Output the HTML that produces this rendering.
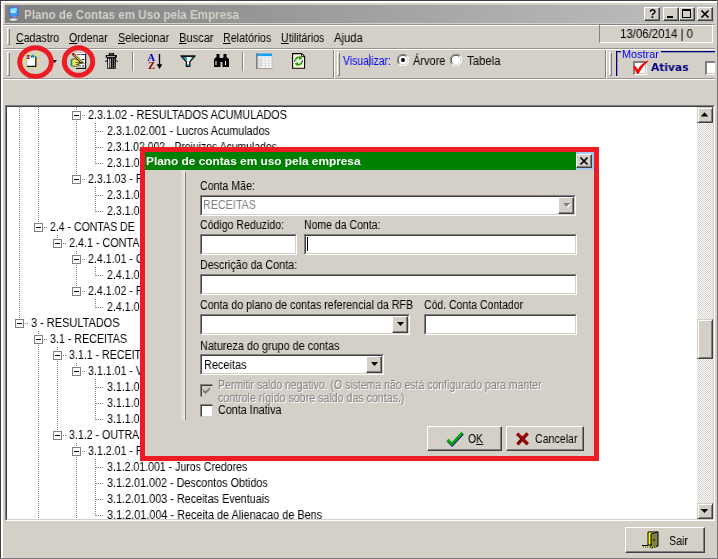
<!DOCTYPE html>
<html lang="pt-BR"><head><meta charset="utf-8"><title>Plano de Contas em Uso pela Empresa</title>
<style>
html,body{margin:0;padding:0}
body{width:718px;height:559px;background:#D4D0C8;position:relative;overflow:hidden;font-family:"Liberation Sans",sans-serif}
div,svg.a,span.t{position:absolute}
div{box-sizing:border-box}
span.t{white-space:pre;transform-origin:0 0;display:block;will-change:transform}
u{text-decoration:underline;text-underline-offset:1px;text-decoration-thickness:1px}
.btn{background:#D4D0C8;border:1px solid;border-color:#fff #404040 #404040 #fff;box-shadow:inset -1px -1px 0 #808080}
.sb{border-color:#D4D0C8 #404040 #404040 #D4D0C8;box-shadow:inset 1px 1px 0 #fff,inset -1px -1px 0 #808080}
.vd{width:1px;background:repeating-linear-gradient(180deg,#808080 0 1px,transparent 1px 2px)}
.hd{height:1px;background:repeating-linear-gradient(90deg,#808080 0 1px,transparent 1px 2px)}
.ex{width:9px;height:9px;border:1px solid #808080;background:#fff}
.ex i{position:absolute;left:1px;top:3px;width:5px;height:1px;background:#000}
</style></head>
<body>
<div style="left:0px;top:0px;width:718px;height:1px;background:#404040"></div>
<div style="left:0px;top:0px;width:1px;height:559px;background:#404040"></div>
<div style="left:1px;top:1px;width:716px;height:2px;background:#fff"></div>
<div style="left:1px;top:1px;width:2px;height:557px;background:#fff"></div>
<div style="left:717px;top:0px;width:1px;height:559px;background:#787878"></div>
<div style="left:0px;top:558px;width:718px;height:1px;background:#787878"></div>
<div style="left:5px;top:5px;width:709px;height:18px;background:linear-gradient(90deg,#808080 0%,#c0c0c0 100%)"></div>
<svg class="a" style="left:8px;top:6px" width="12" height="16" viewBox="0 0 12 16">
<path d="M1 2 L9 0.5 L10.5 9 L2.5 11 Z" fill="#2fa8f0" stroke="#5a5ac8" stroke-width="0.8"/>
<path d="M2 3 L8.5 1.8 L9 5 L2.6 6.5 Z" fill="#7fe0ff"/>
<rect x="3.2" y="5.4" width="4.5" height="1.4" fill="#e8f4ff"/>
<path d="M4 10.5 L8 9.6 L8.6 12.5 L4.5 12.8 Z" fill="#8a8ae0"/>
<ellipse cx="5.5" cy="13.6" rx="4.4" ry="1.7" fill="#e8e8f0" stroke="#505060" stroke-width="0.6"/>
</svg>
<span class="t" style="left:24px;top:7px;font:bold 13px/15px 'Liberation Sans', sans-serif;color:#D4D0C8;transform:scaleX(0.8937)">Plano de Contas em Uso pela Empresa</span>
<div class="btn" style="left:644px;top:7px;width:16px;height:14px;"><span style="position:absolute;left:4px;top:-1px;will-change:transform;font:bold 12px/14px 'Liberation Sans',sans-serif;color:#000">?</span></div>
<div class="btn" style="left:663px;top:7px;width:16px;height:14px;"><div style="position:absolute;left:3px;top:8px;width:6px;height:2px;background:#000"></div></div>
<div class="btn" style="left:679px;top:7px;width:16px;height:14px;"><div style="position:absolute;left:2px;top:1px;width:9px;height:9px;border:1px solid #000;border-top-width:2px"></div></div>
<div class="btn" style="left:697px;top:7px;width:16px;height:14px;"><svg width="12" height="10" viewBox="0 0 12 10" style="position:absolute;left:1px;top:1px"><path d="M2.5 1.5 L9.5 8.5 M9.5 1.5 L2.5 8.5" stroke="#000" stroke-width="1.7" fill="none"/></svg></div>
<div style="left:3px;top:24px;width:712px;height:1px;background:#9a968f"></div>
<div style="left:3px;top:25px;width:712px;height:1px;background:#fff"></div>
<div style="left:3px;top:48px;width:712px;height:1px;background:#9a968f"></div>
<div style="left:3px;top:49px;width:712px;height:1px;background:#fff"></div>
<div style="left:3px;top:78px;width:712px;height:1px;background:#9a968f"></div>
<div style="left:3px;top:79px;width:712px;height:1px;background:#fff"></div>
<div style="left:7px;top:28px;width:3px;height:17px;background:#D4D0C8;border-left:1px solid #fff;border-top:1px solid #fff;border-right:1px solid #808080;border-bottom:1px solid #808080;box-sizing:border-box"></div>
<div style="left:7px;top:52px;width:3px;height:24px;background:#D4D0C8;border-left:1px solid #fff;border-top:1px solid #fff;border-right:1px solid #808080;border-bottom:1px solid #808080;box-sizing:border-box"></div>
<span class="t" style="left:16px;top:31px;font:12px/14px 'Liberation Sans', sans-serif;color:#000;transform:scaleX(0.8850)"><u>C</u>adastro</span>
<span class="t" style="left:69px;top:31px;font:12px/14px 'Liberation Sans', sans-serif;color:#000;transform:scaleX(0.8789)"><u>O</u>rdenar</span>
<span class="t" style="left:118px;top:31px;font:12px/14px 'Liberation Sans', sans-serif;color:#000;transform:scaleX(0.9012)"><u>S</u>elecionar</span>
<span class="t" style="left:179px;top:31px;font:12px/14px 'Liberation Sans', sans-serif;color:#000;transform:scaleX(0.9261)"><u>B</u>uscar</span>
<span class="t" style="left:223px;top:31px;font:12px/14px 'Liberation Sans', sans-serif;color:#000;transform:scaleX(0.8939)"><u>R</u>elatórios</span>
<span class="t" style="left:281px;top:31px;font:12px/14px 'Liberation Sans', sans-serif;color:#000;transform:scaleX(0.8775)"><u>U</u>tilitários</span>
<span class="t" style="left:334px;top:31px;font:12px/14px 'Liberation Sans', sans-serif;color:#000;transform:scaleX(0.9380)">Ajuda</span>
<div style="left:599px;top:24px;width:114px;height:19px;border:1px solid;border-color:#808080 #fff #fff #808080;box-sizing:border-box"></div>
<span class="t" style="left:620px;top:27px;font:12px/14px 'Liberation Sans', sans-serif;color:#000;transform:scaleX(0.9539)">13/06/2014 | 0</span>
<svg class="a" style="left:22px;top:50px" width="22" height="22" viewBox="0 0 22 22">
<g fill="#f8f000"><path d="M2.6 3.6 L4.6 5 L3.8 6 Z M8 2.8 L9.2 2.8 L8.9 4.8 L8.2 4.8 Z M17 2.3 L17.4 3.4 L14.6 5.2 L14 4.4 Z M14.6 9.6 L17.2 9.2 L17 10.8 L14.6 11.4 Z M1 10.2 L4 9.8 L4 11.6 L1.2 11.4 Z M2 17.6 L3.8 15.4 L4.6 16.2 L3 18.2 Z M8 17.2 L9.4 17.2 L9.6 18.8 L8.4 18.8 Z M14 16.2 L14.8 15.6 L17.2 18.4 L16.2 19 Z"/></g>
<rect x="4.6" y="6" width="9" height="10" fill="#fff"/>
<path d="M13.8 6.4 V16.3 H5" fill="none" stroke="#101010" stroke-width="1.2"/>
<path d="M4.6 6 V16" stroke="#a0a0a0" stroke-width="0.6"/>
<path d="M5 5.6 l2.6 3 M7.6 5.6 l-2.6 3 M5 8.4 h2.6 M5 5.6 h2.6" stroke="#a01010" stroke-width="0.9" fill="none"/>
<path d="M8.6 5.4 l1 1.8 l1 -1.8 l1 1.8 l1 -1.8" stroke="#008888" stroke-width="1.1" fill="none"/>
</svg>
<svg class="a" style="left:52px;top:60px" width="6" height="4" viewBox="0 0 6 4"><path d="M0 0 H5 L2.5 3 Z" fill="#000"/></svg>
<svg class="a" style="left:68px;top:52px" width="20" height="19" viewBox="0 0 20 19">
<rect x="7.5" y="1" width="10" height="15" fill="#fff"/>
<path d="M17.6 1.4 V16.4 H8" fill="none" stroke="#101010" stroke-width="1.1"/>
<path d="M9 3 l0.8 -1 l0.8 1 l0.8 -1 l0.8 1" stroke="#d02020" stroke-width="1" fill="none"/>
<path d="M12.8 3 l0.8 -1 l0.8 1 l0.8 -1 l0.8 1 l0.8 -1" stroke="#1010d0" stroke-width="1" fill="none"/>
<path d="M14 7.5 h2.4 M14 11 h2.4 M11.5 14 h1.2 M14 14 h2.4" stroke="#202020" stroke-width="1.1"/>
<rect x="2" y="7.5" width="1.8" height="6.8" fill="#20d8e0"/>
<path d="M3.8 7.4 L7 6.8 L10.5 8.6 L13.5 10.2 L13.5 11.4 L10.8 11.4 L11 14 L6 14.4 L3.8 13.6 Z" fill="#f4ec50" stroke="#202020" stroke-width="0.7"/>
<path d="M7.5 10.6 h4.5 M7.5 12.4 h3.4" stroke="#202020" stroke-width="0.7"/>
<path d="M4.6 1.6 L14.2 10.8" stroke="#101010" stroke-width="2.4"/>
<path d="M5.6 2.6 L13.6 10.2" stroke="#f0e000" stroke-width="1.1"/>
<path d="M4.4 1.4 L5.8 2.8" stroke="#e02020" stroke-width="1.4"/>
</svg>
<svg class="a" style="left:104px;top:52px" width="15" height="18" viewBox="0 0 15 18">
<rect x="4.8" y="0.9" width="5.2" height="2.2" fill="#000"/><rect x="6" y="1.6" width="2.8" height="0.8" fill="#a8a8a8"/>
<rect x="1.8" y="3" width="11" height="2.8" fill="#000"/><path d="M3 4.4 H11" stroke="#e8e8e8" stroke-width="0.8"/>
<path d="M3 5.8 H12 L11.7 16.7 H3.3 Z" fill="#000"/>
<rect x="4.1" y="6.6" width="1.2" height="9.2" fill="#fff"/>
<rect x="6.2" y="6.6" width="0.8" height="9.2" fill="#d8d8d8"/>
<path d="M8.5 6.6 V15.8" stroke="#c0c0c0" stroke-width="0.8" stroke-dasharray="1.2 0.8"/>
<rect x="10.1" y="6.6" width="0.7" height="9.2" fill="#909090"/>
<path d="M3 8.6 L1 9.6 M12 8.6 L14 9.6" stroke="#000" stroke-width="0.9"/>
</svg>
<svg class="a" style="left:14px;top:42px" width="90" height="40" viewBox="14 42 90 40"><ellipse cx="35.5" cy="62.1" rx="15.75" ry="14.4" fill="none" stroke="#ED1C24" stroke-width="4.9"/><ellipse cx="78.5" cy="61.5" rx="14.2" ry="13.85" fill="none" stroke="#ED1C24" stroke-width="5"/></svg>
<div style="left:132px;top:52px;width:1px;height:19px;background:#808080"></div>
<div style="left:133px;top:52px;width:1px;height:19px;background:#fff"></div>
<svg class="a" style="left:147px;top:52px" width="18" height="19" viewBox="0 0 18 19">
<text x="0.6" y="8.6" font-family="Liberation Serif, serif" font-weight="bold" font-size="10.5" fill="#0000c0" textLength="7.6" lengthAdjust="spacingAndGlyphs">A</text>
<text x="1" y="17" font-family="Liberation Serif, serif" font-weight="bold" font-size="10.5" fill="#800000" textLength="7" lengthAdjust="spacingAndGlyphs">Z</text>
<path d="M12.5 2 V14" stroke="#000" stroke-width="1.3"/><path d="M9.7 12.3 H15.3 L12.5 17 Z" fill="#000"/>
</svg>
<svg class="a" style="left:180px;top:55px" width="16" height="13" viewBox="0 0 16 13">
<path d="M1.2 1.2 H14.8 L9.8 6.8 V11.4 H6.4 V6.8 Z" fill="#fff" stroke="#101010" stroke-width="1.3" stroke-linejoin="miter"/>
<path d="M2.6 2 H6.5 L7.2 6.5 Z" fill="#00a0a8"/>
<path d="M12 2 L13.6 2 L10 6 Z" fill="#00a0a8"/>
<rect x="7" y="9.4" width="2.2" height="1.6" fill="#00a0a8"/>
<path d="M1 1.3 H15" stroke="#101010" stroke-width="1.6"/>
</svg>
<svg class="a" style="left:213px;top:53px" width="17" height="15" viewBox="0 0 17 15">
<path d="M3.5 1 h3 v3 l1 2 v8 h-6.5 v-8 l2.5 -2 z M10.5 1 h3 v3 l2.5 2 v8 h-6.5 v-8 l1 -2 z" fill="#000"/>
<rect x="7" y="5" width="3" height="4" fill="#000"/>
<path d="M3 8 v4 M12.5 8 v4" stroke="#fff" stroke-width="1"/>
</svg>
<div style="left:242px;top:52px;width:1px;height:19px;background:#808080"></div>
<div style="left:243px;top:52px;width:1px;height:19px;background:#fff"></div>
<svg class="a" style="left:256px;top:53px" width="17" height="16" viewBox="0 0 17 16">
<rect x="0.5" y="0.5" width="15.5" height="15" fill="#fff" stroke="#b8b8b8" stroke-width="0.8"/>
<rect x="1" y="0.6" width="15" height="2.6" fill="#10a4ff"/>
<rect x="0" y="0" width="1.7" height="16" fill="#808080"/>
<rect x="2" y="5" width="3.6" height="10.4" fill="#e4e4e4"/>
<path d="M2 5 H16 M2 7.6 H16 M2 10.2 H16 M2 12.8 H16 M5.8 4 V15.4 M9.4 4 V15.4 M12.8 4 V15.4" stroke="#d0d0d0" stroke-width="0.7"/>
<path d="M2 15.6 H16" stroke="#909090" stroke-width="0.8"/>
</svg>
<svg class="a" style="left:292px;top:53px" width="14" height="16" viewBox="0 0 14 16">
<path d="M0.6 0.6 H9.6 L12.6 3.6 V15.3 H0.6 Z" fill="#ffffd8" stroke="#000" stroke-width="1.1"/>
<path d="M9.6 0.6 V3.6 H12.6 Z" fill="#fff" stroke="#000" stroke-width="0.9"/>
<path d="M3.4 7.4 A3.3 3.3 0 0 1 8.6 4.9" fill="none" stroke="#28a028" stroke-width="1.7"/>
<path d="M7.4 2.6 L10.6 5.4 L7 7 Z" fill="#28a028"/>
<path d="M9.8 8.6 A3.3 3.3 0 0 1 4.6 11.1" fill="none" stroke="#28a028" stroke-width="1.7"/>
<path d="M5.8 13.4 L2.6 10.6 L6.2 9 Z" fill="#28a028"/>
<path d="M2.6 7 v2 M10.4 7 v2" stroke="#2060c0" stroke-width="1.2"/>
</svg>
<div style="left:333px;top:50px;width:1px;height:28px;background:#808080"></div>
<div style="left:334px;top:50px;width:1px;height:29px;background:#fff"></div>
<div style="left:337px;top:52px;width:3px;height:24px;background:#D4D0C8;border-left:1px solid #fff;border-top:1px solid #fff;border-right:1px solid #808080;border-bottom:1px solid #808080;box-sizing:border-box"></div>
<span class="t" style="left:343px;top:54px;font:12px/14px 'Liberation Sans', sans-serif;color:#0000ff;transform:scaleX(0.8669)">Visualizar:</span>
<div style="left:369px;top:54px;width:1px;height:13px;background:#5050c0"></div>
<svg class="a" style="left:397px;top:54px" width="12" height="12" viewBox="0 0 12 12"><circle cx="6" cy="6" r="5.5" fill="#fff"/><path d="M1.8 10.2 A5.5 5.5 0 0 1 10.2 1.8" fill="none" stroke="#808080" stroke-width="1"/><path d="M2.6 9.4 A4.5 4.5 0 0 1 9.4 2.6" fill="none" stroke="#404040" stroke-width="1"/><path d="M10.2 1.8 A5.5 5.5 0 0 1 1.8 10.2" fill="none" stroke="#fff" stroke-width="1"/><path d="M9.4 2.6 A4.5 4.5 0 0 1 2.6 9.4" fill="none" stroke="#D4D0C8" stroke-width="1"/><circle cx="6" cy="6" r="2" fill="#000"/></svg>
<span class="t" style="left:413px;top:54px;font:12px/14px 'Liberation Sans', sans-serif;color:#000;transform:scaleX(0.9139)">Árvore</span>
<svg class="a" style="left:450px;top:54px" width="12" height="12" viewBox="0 0 12 12"><circle cx="6" cy="6" r="5.5" fill="#fff"/><path d="M1.8 10.2 A5.5 5.5 0 0 1 10.2 1.8" fill="none" stroke="#808080" stroke-width="1"/><path d="M2.6 9.4 A4.5 4.5 0 0 1 9.4 2.6" fill="none" stroke="#404040" stroke-width="1"/><path d="M10.2 1.8 A5.5 5.5 0 0 1 1.8 10.2" fill="none" stroke="#fff" stroke-width="1"/><path d="M9.4 2.6 A4.5 4.5 0 0 1 2.6 9.4" fill="none" stroke="#D4D0C8" stroke-width="1"/></svg>
<span class="t" style="left:467px;top:54px;font:12px/14px 'Liberation Sans', sans-serif;color:#000;transform:scaleX(0.9470)">Tabela</span>
<div style="left:605px;top:50px;width:1px;height:28px;background:#808080"></div>
<div style="left:606px;top:50px;width:1px;height:29px;background:#fff"></div>
<div style="left:609px;top:52px;width:3px;height:24px;background:#D4D0C8;border-left:1px solid #fff;border-top:1px solid #fff;border-right:1px solid #808080;border-bottom:1px solid #808080;box-sizing:border-box"></div>
<div style="left:616px;top:51px;width:99px;height:25px;border-left:1px solid #000080;border-top:1px solid #000080;box-sizing:border-box;box-shadow:inset 1px 1px 0 rgba(0,0,128,.3)"></div>
<div style="left:621px;top:50px;width:40px;height:4px;background:#D4D0C8"></div>
<span class="t" style="left:622px;top:49px;font:10px/12px 'Liberation Sans', sans-serif;color:#0000ff;transform:scaleX(1.0883)">Mostrar</span>
<div style="left:633px;top:61px;width:14px;height:14px;background:#fff;border-style:solid;border-width:2px 1px 1px 2px;border-color:#808080 #fff #fff #808080;box-sizing:border-box"><div style="position:absolute;left:0;top:0;width:11px;height:11px;border-right:1px solid #c4c4c4;border-bottom:1px solid #c4c4c4"></div></div>
<svg class="a" style="left:631px;top:58px" width="19" height="18" viewBox="0 0 19 18"><path d="M2 8.6 L4.2 8 L7 11.4 C9 7.6 12.6 4.4 17.2 2.6 L17.2 3.4 C13.4 6.4 10.2 10.6 7.6 15.8 L6 15.8 Z" fill="#FF0000"/></svg>
<span class="t" style="left:651px;top:61px;font:bold 11px/13px 'DejaVu Sans', 'Liberation Sans', sans-serif;color:#000080;transform:scaleX(0.9693)">Ativas</span>
<div style="left:705px;top:61px;width:10px;height:14px;overflow:hidden">
<div style="left:0px;top:0px;width:14px;height:14px;background:#fff;border-style:solid;border-width:2px 1px 1px 2px;border-color:#808080 #fff #fff #808080;box-sizing:border-box"><div style="position:absolute;left:0;top:0;width:11px;height:11px;border-right:1px solid #c4c4c4;border-bottom:1px solid #c4c4c4"></div></div>
</div>
<div style="left:5px;top:105px;width:710px;height:416px;background:#fff;border:1px solid;border-color:#808080 #fff #fff #808080;box-sizing:border-box"><div style="position:absolute;left:0;top:0;right:0;bottom:0;border:1px solid;border-color:#404040 #D4D0C8 #D4D0C8 #404040"></div></div>
<div id="tree" style="left:7px;top:107px;width:690px;height:412px;overflow:hidden">
<div class="vd" style="left:12px;top:0px;height:216px"></div>
<div class="vd" style="left:31px;top:0px;height:120px"></div>
<div class="vd" style="left:69px;top:0px;height:72px"></div>
<div class="vd" style="left:88px;top:16px;height:41px"></div>
<div class="vd" style="left:88px;top:80px;height:25px"></div>
<div class="vd" style="left:50px;top:128px;height:8px"></div>
<div class="vd" style="left:69px;top:144px;height:40px"></div>
<div class="vd" style="left:88px;top:160px;height:9px"></div>
<div class="vd" style="left:88px;top:192px;height:9px"></div>
<div class="vd" style="left:31px;top:224px;height:188px"></div>
<div class="vd" style="left:50px;top:240px;height:88px"></div>
<div class="vd" style="left:69px;top:256px;height:8px"></div>
<div class="vd" style="left:88px;top:272px;height:41px"></div>
<div class="vd" style="left:69px;top:336px;height:76px"></div>
<div class="vd" style="left:88px;top:352px;height:57px"></div>
<div class="hd" style="left:75px;top:8px;width:4px"></div>
<div class="ex" style="left:65px;top:4px"><i></i></div>
<span class="t" style="left:81px;top:1px;font:12px/14px 'Liberation Sans', sans-serif;color:#000;transform:scaleX(0.8997)">2.3.1.02 - RESULTADOS ACUMULADOS</span>
<div class="hd" style="left:89px;top:24px;width:8px"></div>
<span class="t" style="left:100px;top:17px;font:12px/14px 'Liberation Sans', sans-serif;color:#000;transform:scaleX(0.8944)">2.3.1.02.001 - Lucros Acumulados</span>
<div class="hd" style="left:89px;top:40px;width:8px"></div>
<span class="t" style="left:100px;top:33px;font:12px/14px 'Liberation Sans', sans-serif;color:#000;transform:scaleX(0.8698)">2.3.1.02.002 - Prejuizos Acumulados</span>
<div class="hd" style="left:89px;top:56px;width:8px"></div>
<span class="t" style="left:100px;top:49px;font:12px/14px 'Liberation Sans', sans-serif;color:#000;transform:scaleX(0.8850)">2.3.1.02.003 - Reservas de Lucros</span>
<div class="hd" style="left:75px;top:72px;width:4px"></div>
<div class="ex" style="left:65px;top:68px"><i></i></div>
<span class="t" style="left:81px;top:65px;font:12px/14px 'Liberation Sans', sans-serif;color:#000;transform:scaleX(0.8850)">2.3.1.03 - RESERVAS DE CAPITAL</span>
<div class="hd" style="left:89px;top:88px;width:8px"></div>
<span class="t" style="left:100px;top:81px;font:12px/14px 'Liberation Sans', sans-serif;color:#000;transform:scaleX(0.8850)">2.3.1.03.001 - Reserva de Capital</span>
<div class="hd" style="left:89px;top:104px;width:8px"></div>
<span class="t" style="left:100px;top:97px;font:12px/14px 'Liberation Sans', sans-serif;color:#000;transform:scaleX(0.8850)">2.3.1.03.002 - Reserva Legal</span>
<div class="hd" style="left:37px;top:120px;width:4px"></div>
<div class="ex" style="left:27px;top:116px"><i></i></div>
<span class="t" style="left:43px;top:113px;font:12px/14px 'Liberation Sans', sans-serif;color:#000;transform:scaleX(0.8780)">2.4 - CONTAS DE  COMPENSACAO</span>
<div class="hd" style="left:56px;top:136px;width:4px"></div>
<div class="ex" style="left:46px;top:132px"><i></i></div>
<span class="t" style="left:62px;top:129px;font:12px/14px 'Liberation Sans', sans-serif;color:#000;transform:scaleX(0.8984)">2.4.1 - CONTAS DE COMPENSACAO</span>
<div class="hd" style="left:75px;top:152px;width:4px"></div>
<div class="ex" style="left:65px;top:148px"><i></i></div>
<span class="t" style="left:81px;top:145px;font:12px/14px 'Liberation Sans', sans-serif;color:#000;transform:scaleX(0.8850)">2.4.1.01 - CONTAS DE COMPENSACAO</span>
<div class="hd" style="left:89px;top:168px;width:8px"></div>
<span class="t" style="left:100px;top:161px;font:12px/14px 'Liberation Sans', sans-serif;color:#000;transform:scaleX(0.8850)">2.4.1.01.001 - Compensacao Passiva</span>
<div class="hd" style="left:75px;top:184px;width:4px"></div>
<div class="ex" style="left:65px;top:180px"><i></i></div>
<span class="t" style="left:81px;top:177px;font:12px/14px 'Liberation Sans', sans-serif;color:#000;transform:scaleX(0.8850)">2.4.1.02 - FIANCAS</span>
<div class="hd" style="left:89px;top:200px;width:8px"></div>
<span class="t" style="left:100px;top:193px;font:12px/14px 'Liberation Sans', sans-serif;color:#000;transform:scaleX(0.8850)">2.4.1.02.001 - Fiancas Concedidas</span>
<div class="hd" style="left:18px;top:216px;width:4px"></div>
<div class="ex" style="left:8px;top:212px"><i></i></div>
<span class="t" style="left:24px;top:209px;font:12px/14px 'Liberation Sans', sans-serif;color:#000;transform:scaleX(0.9131)">3 - RESULTADOS</span>
<div class="hd" style="left:37px;top:232px;width:4px"></div>
<div class="ex" style="left:27px;top:228px"><i></i></div>
<span class="t" style="left:43px;top:225px;font:12px/14px 'Liberation Sans', sans-serif;color:#000;transform:scaleX(0.8905)">3.1 - RECEITAS</span>
<div class="hd" style="left:56px;top:248px;width:4px"></div>
<div class="ex" style="left:46px;top:244px"><i></i></div>
<span class="t" style="left:62px;top:241px;font:12px/14px 'Liberation Sans', sans-serif;color:#000;transform:scaleX(0.8850)">3.1.1 - RECEITAS OPERACIONAIS</span>
<div class="hd" style="left:75px;top:264px;width:4px"></div>
<div class="ex" style="left:65px;top:260px"><i></i></div>
<span class="t" style="left:81px;top:257px;font:12px/14px 'Liberation Sans', sans-serif;color:#000;transform:scaleX(0.8850)">3.1.1.01 - VENDAS</span>
<div class="hd" style="left:89px;top:280px;width:8px"></div>
<span class="t" style="left:100px;top:273px;font:12px/14px 'Liberation Sans', sans-serif;color:#000;transform:scaleX(0.8850)">3.1.1.01.001 - Vendas de Mercadorias</span>
<div class="hd" style="left:89px;top:296px;width:8px"></div>
<span class="t" style="left:100px;top:289px;font:12px/14px 'Liberation Sans', sans-serif;color:#000;transform:scaleX(0.8850)">3.1.1.01.002 - Vendas de Produtos</span>
<div class="hd" style="left:89px;top:312px;width:8px"></div>
<span class="t" style="left:100px;top:305px;font:12px/14px 'Liberation Sans', sans-serif;color:#000;transform:scaleX(0.8850)">3.1.1.01.003 - Vendas de Servicos</span>
<div class="hd" style="left:56px;top:328px;width:4px"></div>
<div class="ex" style="left:46px;top:324px"><i></i></div>
<span class="t" style="left:62px;top:321px;font:12px/14px 'Liberation Sans', sans-serif;color:#000;transform:scaleX(0.8850)">3.1.2 - OUTRAS RECEITAS</span>
<div class="hd" style="left:75px;top:344px;width:4px"></div>
<div class="ex" style="left:65px;top:340px"><i></i></div>
<span class="t" style="left:81px;top:337px;font:12px/14px 'Liberation Sans', sans-serif;color:#000;transform:scaleX(0.8850)">3.1.2.01 - RECEITAS FINANCEIRAS</span>
<div class="hd" style="left:89px;top:360px;width:8px"></div>
<span class="t" style="left:100px;top:353px;font:12px/14px 'Liberation Sans', sans-serif;color:#000;transform:scaleX(0.8794)">3.1.2.01.001 - Juros Credores</span>
<div class="hd" style="left:89px;top:376px;width:8px"></div>
<span class="t" style="left:100px;top:369px;font:12px/14px 'Liberation Sans', sans-serif;color:#000;transform:scaleX(0.8994)">3.1.2.01.002 - Descontos Obtidos</span>
<div class="hd" style="left:89px;top:392px;width:8px"></div>
<span class="t" style="left:100px;top:385px;font:12px/14px 'Liberation Sans', sans-serif;color:#000;transform:scaleX(0.9027)">3.1.2.01.003 - Receitas Eventuais</span>
<div class="hd" style="left:89px;top:408px;width:8px"></div>
<span class="t" style="left:100px;top:401px;font:12px/14px 'Liberation Sans', sans-serif;color:#000;transform:scaleX(0.9056)">3.1.2.01.004 - Receita de Alienacao de Bens</span>
</div>
<div style="left:697px;top:107px;width:16px;height:412px;background:repeating-conic-gradient(#fff 0% 25%, #D4D0C8 0% 50%) 0 0/2px 2px"></div>
<div class="btn sb" style="left:697px;top:107px;width:16px;height:16px;"><svg width="8" height="5" viewBox="0 0 8 5" style="position:absolute;left:3px;top:4px"><path d="M-0.3 4.5 L3.5 0.3 L7.3 4.5 Z" fill="#000"/></svg></div>
<div class="btn sb" style="left:697px;top:503px;width:16px;height:16px;"><svg width="8" height="5" viewBox="0 0 8 5" style="position:absolute;left:3px;top:5px"><path d="M-0.2 0 H7.2 L3.5 4 Z" fill="#000"/></svg></div>
<div class="btn sb" style="left:697px;top:319px;width:16px;height:40px;"></div>
<div class="btn" style="left:625px;top:527px;width:80px;height:26px;"></div>
<svg class="a" style="left:642px;top:531px" width="18" height="18" viewBox="0 0 18 18">
<path d="M6 1 H15 V14 H6 Z" fill="#f8f800" stroke="#000" stroke-width="1"/>
<path d="M9 3 L16 0.8 V15 L9 17 Z" fill="#808040" stroke="#000" stroke-width="1"/>
<path d="M11 9 h2" stroke="#000" stroke-width="1"/>
<path d="M0 14.5 H6" stroke="#000" stroke-width="1"/>
<path d="M1 16 H14" stroke="#a0a020" stroke-width="2" stroke-dasharray="1 1"/>
</svg>
<span class="t" style="left:669px;top:534px;font:12px/14px 'Liberation Sans', sans-serif;color:#000;transform:scaleX(0.8902)">Sair</span>
<div style="left:140px;top:147px;width:459px;height:314px;background:#ED1C24"></div>
<div style="left:145px;top:152px;width:449px;height:304px;background:#D4D0C8"></div>
<div style="left:145px;top:152px;width:431px;height:18px;background:#008000"></div>
<div style="left:576px;top:152px;width:18px;height:18px;background:#A6CAF0"></div>
<div class="btn" style="left:576px;top:154px;width:16px;height:14px;"><svg width="12" height="10" viewBox="0 0 12 10" style="position:absolute;left:1px;top:1px"><path d="M2.5 1.5 L9.5 8.5 M9.5 1.5 L2.5 8.5" stroke="#000" stroke-width="1.7" fill="none"/></svg></div>
<span class="t" style="left:146px;top:155px;font:bold 11px/13px 'Liberation Sans', sans-serif;color:#fff;transform:scaleX(1.0763)">Plano de contas em uso pela empresa</span>
<div style="left:180px;top:170px;width:5px;height:250px;background:linear-gradient(90deg,#D4D0C8,#eeece8)"></div>
<div style="left:185px;top:172px;width:1px;height:248px;background:#808080"></div>
<span class="t" style="left:200px;top:179px;font:12px/14px 'Liberation Sans', sans-serif;color:#000;transform:scaleX(0.8864)">Conta Mãe:</span>
<div style="left:200px;top:195px;width:376px;height:21px;background:#fff;border:1px solid;border-color:#808080 #fff #fff #808080;box-sizing:border-box"><div style="position:absolute;left:0;top:0;right:0;bottom:0;border:1px solid;border-color:#404040 #D4D0C8 #D4D0C8 #404040"></div></div>
<div class="btn" style="left:558px;top:197px;width:16px;height:17px;"><svg width="9" height="6" viewBox="0 0 9 6" style="position:absolute;left:4px;top:5px"><path d="M1 1 H8 L4.5 5 Z" fill="#fff"/><path d="M0 0 H7 L3.5 4 Z" fill="#808080"/></svg></div>
<span class="t" style="left:203px;top:198px;font:12px/14px 'Liberation Sans', sans-serif;color:#808080;transform:scaleX(0.8964)">RECEITAS</span>
<span class="t" style="left:200px;top:218px;font:12px/14px 'Liberation Sans', sans-serif;color:#000;transform:scaleX(0.8804)">Código Reduzido:</span>
<span class="t" style="left:304px;top:218px;font:12px/14px 'Liberation Sans', sans-serif;color:#000;transform:scaleX(0.8754)">Nome da Conta:</span>
<div style="left:200px;top:234px;width:97px;height:21px;background:#fff;border:1px solid;border-color:#808080 #fff #fff #808080;box-sizing:border-box"><div style="position:absolute;left:0;top:0;right:0;bottom:0;border:1px solid;border-color:#404040 #D4D0C8 #D4D0C8 #404040"></div></div>
<div style="left:304px;top:234px;width:273px;height:21px;background:#fff;border:1px solid;border-color:#808080 #fff #fff #808080;box-sizing:border-box"><div style="position:absolute;left:0;top:0;right:0;bottom:0;border:1px solid;border-color:#404040 #D4D0C8 #D4D0C8 #404040"></div></div>
<div style="left:307px;top:237px;width:1px;height:14px;background:#000"></div>
<span class="t" style="left:200px;top:258px;font:12px/14px 'Liberation Sans', sans-serif;color:#000;transform:scaleX(0.8921)">Descrição da Conta:</span>
<div style="left:200px;top:274px;width:377px;height:21px;background:#fff;border:1px solid;border-color:#808080 #fff #fff #808080;box-sizing:border-box"><div style="position:absolute;left:0;top:0;right:0;bottom:0;border:1px solid;border-color:#404040 #D4D0C8 #D4D0C8 #404040"></div></div>
<span class="t" style="left:200px;top:298px;font:12px/14px 'Liberation Sans', sans-serif;color:#000;transform:scaleX(0.8869)">Conta do plano de contas referencial da RFB</span>
<span class="t" style="left:424px;top:298px;font:12px/14px 'Liberation Sans', sans-serif;color:#000;transform:scaleX(0.8730)">Cód. Conta Contador</span>
<div style="left:200px;top:314px;width:210px;height:21px;background:#fff;border:1px solid;border-color:#808080 #fff #fff #808080;box-sizing:border-box"><div style="position:absolute;left:0;top:0;right:0;bottom:0;border:1px solid;border-color:#404040 #D4D0C8 #D4D0C8 #404040"></div></div>
<div class="btn" style="left:392px;top:316px;width:16px;height:17px;"><svg width="9" height="6" viewBox="0 0 9 6" style="position:absolute;left:4px;top:5px"><path d="M0 0 H7 L3.5 4 Z" fill="#000"/></svg></div>
<div style="left:424px;top:314px;width:153px;height:21px;background:#fff;border:1px solid;border-color:#808080 #fff #fff #808080;box-sizing:border-box"><div style="position:absolute;left:0;top:0;right:0;bottom:0;border:1px solid;border-color:#404040 #D4D0C8 #D4D0C8 #404040"></div></div>
<span class="t" style="left:200px;top:339px;font:12px/14px 'Liberation Sans', sans-serif;color:#000;transform:scaleX(0.9013)">Natureza do grupo de contas</span>
<div style="left:200px;top:354px;width:184px;height:21px;background:#fff;border:1px solid;border-color:#808080 #fff #fff #808080;box-sizing:border-box"><div style="position:absolute;left:0;top:0;right:0;bottom:0;border:1px solid;border-color:#404040 #D4D0C8 #D4D0C8 #404040"></div></div>
<div class="btn" style="left:366px;top:356px;width:16px;height:17px;"><svg width="9" height="6" viewBox="0 0 9 6" style="position:absolute;left:4px;top:5px"><path d="M0 0 H7 L3.5 4 Z" fill="#000"/></svg></div>
<span class="t" style="left:204px;top:358px;font:12px/14px 'Liberation Sans', sans-serif;color:#000;transform:scaleX(0.9103)">Receitas</span>
<div style="left:200px;top:384px;width:13px;height:13px;background:#D4D0C8;border:1px solid;border-color:#808080 #fff #fff #808080;box-sizing:border-box"><div style="position:absolute;left:0;top:0;width:10px;height:10px;border:1px solid;border-color:#404040 #D4D0C8 #D4D0C8 #404040;box-sizing:content-box;margin:0"></div></div>
<svg class="a" style="left:203px;top:387px" width="8" height="8" viewBox="0 0 8 8"><path d="M0 2 L2.4 4.2 L7 0 V2.8 L2.4 7 L0 4.8 Z" fill="#808080"/></svg>
<span class="t" style="left:218px;top:378px;font:12px/14px 'Liberation Sans', sans-serif;color:#808080;text-shadow:1px 1px 0 #fff;transform:scaleX(0.8739)">Permitir saldo negativo. (O sistema não está configurado para manter</span>
<span class="t" style="left:218px;top:391px;font:12px/14px 'Liberation Sans', sans-serif;color:#808080;text-shadow:1px 1px 0 #fff;transform:scaleX(0.8876)">controle rígido sobre saldo das contas.)</span>
<div style="left:200px;top:404px;width:13px;height:13px;background:#fff;border:1px solid;border-color:#808080 #fff #fff #808080;box-sizing:border-box"><div style="position:absolute;left:0;top:0;width:10px;height:10px;border:1px solid;border-color:#404040 #D4D0C8 #D4D0C8 #404040;box-sizing:content-box;margin:0"></div></div>
<span class="t" style="left:218px;top:403px;font:12px/14px 'Liberation Sans', sans-serif;color:#000;transform:scaleX(0.8979)">Conta Inativa</span>
<div class="btn" style="left:427px;top:426px;width:75px;height:25px;"></div>
<svg class="a" style="left:446px;top:430px" width="18" height="17" viewBox="0 0 18 17"><path d="M1.6 9.6 L5.8 14 L16.4 2.6" fill="none" stroke="#101090" stroke-width="3" stroke-linejoin="miter" transform="translate(0.3,0.9)"/><path d="M1.6 9.6 L5.8 14 L16.4 2.6" fill="none" stroke="#10a810" stroke-width="2.6" stroke-linejoin="miter"/></svg>
<span class="t" style="left:468px;top:432px;font:12px/14px 'Liberation Sans', sans-serif;color:#000;transform:scaleX(0.8649)">O<u>K</u></span>
<div class="btn" style="left:506px;top:426px;width:78px;height:25px;"></div>
<svg class="a" style="left:515px;top:431px" width="16" height="16" viewBox="0 0 16 16"><path d="M2.2 2.6 L12.8 13.2 M12.6 2.4 L2.4 13.4" fill="none" stroke="#800000" stroke-width="3.4" stroke-linecap="butt"/><path d="M2.6 2.2 L12.4 12 M12 2.2 L8.6 6" fill="none" stroke="#b01010" stroke-width="1.2"/></svg>
<span class="t" style="left:535px;top:432px;font:12px/14px 'Liberation Sans', sans-serif;color:#000;transform:scaleX(0.8848)">Cancelar</span>
</body></html>
